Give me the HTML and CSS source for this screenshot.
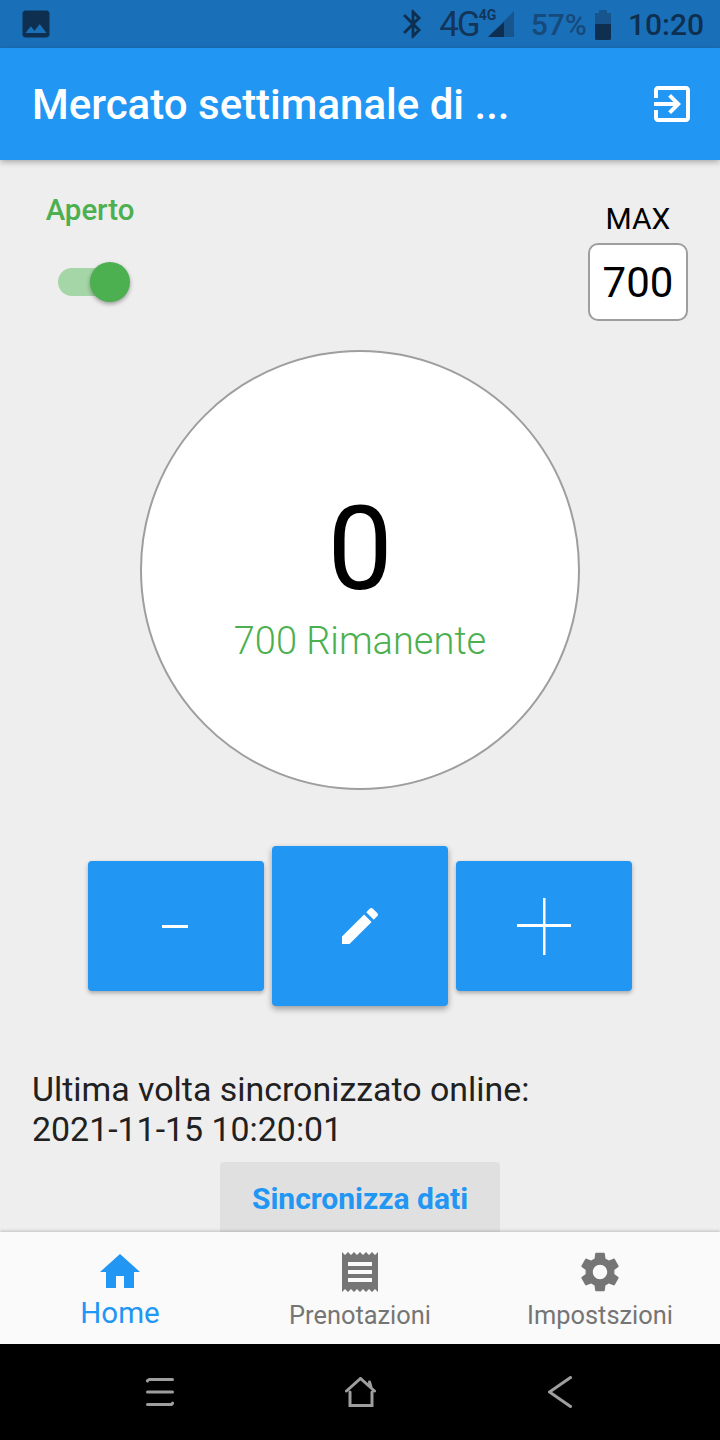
FILE: index.html
```html
<!DOCTYPE html>
<html lang="en">
<head>
    <meta charset="UTF-8">
    <meta name="viewport" content="width=device-width, initial-scale=1.0">
    <title>Mercato settimanale</title>
    <link rel="stylesheet" href="styles.css">
</head>
<body>
    <div class="status-bar">
        <svg class="status-photo" viewBox="0 0 24 24"><path d="M21 19V5c0-1.1-.9-2-2-2H5c-1.1 0-2 .9-2 2v14c0 1.100.9 2 2 2h14c1.100 0 2-.9 2-2zM8.500 13.500l2.500 3.010L14.500 12l4.500 6H5l3.500-4.500z"/></svg>
        <div class="status-right">
            <svg class="status-bt" viewBox="0 0 24 24"><path d="M17.710 7.710L12 2h-1v7.590L6.410 5 5 6.410 10.590 12 5 17.590 6.410 19 11 14.410V22h1l5.710-5.710-4.300-4.290 4.300-4.290zM13 5.830l1.880 1.880L13 9.590V5.830zm1.880 10.460L13 18.170v-3.760l1.880 1.880z"/></svg>
            <span class="status-net">4G</span>
            <span class="status-signal">
                <span class="status-net-small">4G</span>
                <svg viewBox="0 0 26 26"><path class="signal-dim" d="M26 0V26H0z"/><path d="M16 11V26H0z"/></svg>
            </span>
            <span class="status-pct">57%</span>
            <svg class="status-batt" viewBox="0 0 16 30"><path class="signal-dim" d="M4 0h8v3h4v27H0V3h4z"/><path d="M0 14h16v14a2 2 0 0 1-2 2H2a2 2 0 0 1-2-2z"/></svg>
            <span class="status-time">10:20</span>
        </div>
    </div>

    <header class="app-bar">
        <h1>Mercato settimanale di ...</h1>
        <svg class="app-bar-icon" viewBox="0 0 24 24"><path d="M10.090 15.590L11.500 17l5-5-5-5-1.410 1.410L12.670 11H3v2h9.670l-2.580 2.590zM19 3H5c-1.110 0-2 .9-2 2v4h2V5h14v14H5v-4H3v4c0 1.100.89 2 2 2h14c1.100 0 2-.9 2-2V5c0-1.100-.9-2-2-2z"/></svg>
    </header>

    <main class="content">
        <div class="top-row">
            <div class="open-col">
                <div class="open-label">Aperto</div>
                <div class="switch"><div class="switch-knob"></div></div>
            </div>
            <div class="max-col">
                <div class="max-label">MAX</div>
                <div class="max-box">700</div>
            </div>
        </div>

        <div class="counter">
            <div class="counter-value">0</div>
            <div class="counter-left">700 Rimanente</div>
        </div>

        <div class="actions">
            <button class="action-btn">
                <span class="minus"></span>
            </button>
            <button class="action-btn action-btn-big">
                <svg class="edit-icon" viewBox="0 0 24 24"><path d="M3 17.250V21h3.750L17.810 9.940l-3.750-3.750L3 17.250zM20.710 7.040c.39-.39.39-1.020 0-1.410l-2.340-2.340c-.39-.39-1.020-.39-1.410 0l-1.830 1.830 3.750 3.750 1.830-1.830z"/></svg>
            </button>
            <button class="action-btn">
                <svg class="plus-icon" viewBox="0 0 54 57"><path d="M26 0h2.500v26H54v3H28.500v28H26V29H0v-3h26z"/></svg>
            </button>
        </div>

        <p class="sync-text">Ultima volta sincronizzato online:<br>2021-11-15 10:20:01</p>
        <button class="sync-btn">Sincronizza dati</button>
    </main>

    <nav class="bottom-nav">
        <div class="nav-item nav-item-active">
            <svg viewBox="0 0 24 24"><path d="M10 20v-6h4v6h5v-8h3L12 3 2 12h3v8z"/></svg>
            <span>Home</span>
        </div>
        <div class="nav-item">
            <svg viewBox="0 0 24 24"><path d="M18 17H6v-2h12v2zm0-4H6v-2h12v2zm0-4H6V7h12v2zM3 22l1.500-1.500L6 22l1.500-1.500L9 22l1.500-1.500L12 22l1.500-1.500L15 22l1.500-1.500L18 22l1.500-1.500L21 22V2l-1.500 1.500L18 2l-1.500 1.500L15 2l-1.500 1.500L12 2l-1.500 1.500L9 2 7.500 3.500 6 2 4.500 3.500 3 2v20z"/></svg>
            <span>Prenotazioni</span>
        </div>
        <div class="nav-item">
            <svg viewBox="0 0 24 24"><path d="M19.140 12.940c.04-.3.060-.61.060-.94 0-.32-.02-.64-.07-.94l2.030-1.580c.18-.14.23-.41.120-.61l-1.920-3.320c-.12-.22-.37-.29-.59-.22l-2.390.96c-.5-.38-1.030-.7-1.620-.94l-.36-2.540c-.04-.24-.24-.41-.48-.41h-3.840c-.24 0-.43.17-.47.41l-.36 2.540c-.59.24-1.130.57-1.620.94l-2.390-.96c-.22-.08-.47 0-.59.22L2.740 8.870c-.12.21-.08.47.12.61l2.030 1.580c-.05.3-.09.63-.09.94s.02.64.07.94l-2.030 1.580c-.18.14-.23.41-.12.61l1.920 3.320c.12.22.37.29.59.22l2.390-.96c.5.38 1.030.7 1.620.94l.36 2.540c.05.24.24.41.48.41h3.840c.24 0 .44-.17.47-.41l.36-2.540c.59-.24 1.130-.56 1.620-.94l2.390.96c.22.08.47 0 .59-.22l1.920-3.320c.12-.22.07-.47-.12-.61l-2.010-1.580zM12 15.600c-1.980 0-3.600-1.620-3.600-3.600s1.620-3.600 3.600-3.600 3.600 1.620 3.600 3.600-1.620 3.600-3.600 3.600z"/></svg>
            <span>Impostszioni</span>
        </div>
    </nav>

    <div class="system-nav">
        <div class="system-item">
            <svg class="system-menu" viewBox="0 0 28 28"><path d="M3 1.500h23.500M1.500 3v-.5M1.500 14h25M1.500 26.500h24M26.500 25v.5"/></svg>
        </div>
        <div class="system-item">
            <svg class="system-home" viewBox="0 0 31 30"><path d="M1.500 14L15.500 1.500 29.500 14M24.500 5l1.500 5M5 15v13.500h22V15"/></svg>
        </div>
        <div class="system-item">
            <svg class="system-back" viewBox="0 0 24 32"><path d="M22.500 1.500L1.500 16l21 14.500"/></svg>
        </div>
    </div>
</body>
</html>
```

FILE: styles.css
```css
* {
    box-sizing: border-box;
}
body {
    margin: 0;
    width: 720px;
    height: 1440px;
    display: flex;
    flex-direction: column;
    overflow: hidden;
    background-color: #eeeeee;
    font-family: Roboto, "Liberation Sans", sans-serif;
}
.status-bar {
    height: 48px;
    flex-shrink: 0;
    display: flex;
    align-items: center;
    justify-content: space-between;
    padding: 0 16px 0 18px;
    background-color: #1a70b8;
    color: #0e2f50;
    fill: #0e2f50;
}
.status-photo {
    width: 36px;
    height: 36px;
}
.status-right {
    display: flex;
    align-items: center;
}
.status-bt {
    width: 34px;
    height: 34px;
    margin-right: 9px;
}
.status-net {
    font-size: 35px;
    letter-spacing: -2px;
    color: #12365a;
    margin-right: 9px;
}
.status-signal {
    position: relative;
    width: 26px;
    height: 26px;
    margin-right: 17px;
}
.status-signal svg {
    display: block;
    width: 26px;
    height: 26px;
}
.status-net-small {
    position: absolute;
    left: -9px;
    top: -4px;
    font-size: 14px;
    line-height: 16px;
    font-weight: 700;
    color: #12365a;
}
.signal-dim {
    fill: #17558f;
}
.status-pct {
    font-size: 30px;
    font-weight: 500;
    color: #164a7c;
    margin-right: 8px;
}
.status-batt {
    width: 16px;
    height: 30px;
    margin-top: 2px;
    margin-right: 17px;
}
.status-time {
    font-size: 30px;
    font-weight: 500;
}
.app-bar {
    height: 112px;
    flex-shrink: 0;
    display: flex;
    align-items: center;
    justify-content: space-between;
    padding: 0 24px 0 32px;
    background-color: #2196f3;
    box-shadow: 0 2px 6px rgba(0, 0, 0, 0.3);
    position: relative;
    z-index: 2;
}
.app-bar h1 {
    margin: 0;
    font-size: 42px;
    font-weight: 500;
    color: white;
}
.app-bar-icon {
    width: 48px;
    height: 48px;
    fill: white;
}
.content {
    flex: 1;
    min-height: 0;
    overflow: hidden;
    display: flex;
    flex-direction: column;
}
.top-row {
    display: flex;
    justify-content: space-between;
    padding: 0 32px;
}
.open-col {
    display: flex;
    flex-direction: column;
    align-items: center;
    width: 116px;
    padding-top: 34px;
}
.open-label {
    font-size: 29.400px;
    line-height: 33px;
    font-weight: 500;
    color: #4caf50;
}
.switch {
    position: relative;
    width: 68px;
    height: 28px;
    margin-top: 41px;
    margin-left: 4px;
    border-radius: 14px;
    background-color: #a5d6a7;
}
.switch-knob {
    position: absolute;
    right: -4px;
    top: -6px;
    width: 40px;
    height: 40px;
    border-radius: 50%;
    background-color: #4caf50;
    box-shadow: 0 2px 4px rgba(0, 0, 0, 0.35);
}
.max-col {
    display: flex;
    flex-direction: column;
    align-items: center;
    padding-top: 41px;
}
.max-label {
    font-size: 30px;
    line-height: 35px;
    color: black;
}
.max-box {
    width: 100px;
    height: 78px;
    margin-top: 7px;
    display: flex;
    align-items: center;
    justify-content: center;
    background-color: white;
    border: 2px solid #9e9e9e;
    border-radius: 10px;
    font-size: 42px;
    color: black;
}
.counter {
    width: 440px;
    height: 440px;
    margin: 29px auto 0;
    flex-shrink: 0;
    display: flex;
    flex-direction: column;
    align-items: center;
    justify-content: center;
    background-color: white;
    border: 2px solid #9e9e9e;
    border-radius: 50%;
}
.counter-value {
    font-size: 116px;
    line-height: 136px;
    color: black;
}
.counter-left {
    font-size: 38px;
    line-height: 44px;
    font-weight: 300;
    color: #4caf50;
    margin-top: 2px;
    margin-bottom: -4px;
}
.actions {
    display: flex;
    align-items: center;
    justify-content: center;
    gap: 8px;
    margin-top: 56px;
}
.action-btn {
    width: 176px;
    height: 130px;
    padding: 0;
    display: flex;
    align-items: center;
    justify-content: center;
    background-color: #2196f3;
    border: none;
    border-radius: 4px;
    box-shadow: 0 2px 4px rgba(0, 0, 0, 0.3);
}
.action-btn-big {
    height: 160px;
    box-shadow: 0 3px 6px rgba(0, 0, 0, 0.35);
}
.minus {
    display: block;
    width: 26px;
    height: 3px;
    margin-left: -2px;
    margin-top: 1px;
    background-color: white;
}
.edit-icon {
    width: 48px;
    height: 48px;
    fill: white;
}
.plus-icon {
    width: 54px;
    height: 57px;
    margin-left: -1px;
    fill: white;
}
.sync-text {
    margin: 64px 0 0;
    padding: 0 32px;
    font-size: 33.900px;
    line-height: 40px;
    color: #212121;
}
.sync-btn {
    width: 280px;
    height: 74px;
    margin: 12px auto 0;
    flex-shrink: 0;
    padding: 0 0 2px;
    background-color: #e0e0e0;
    border: none;
    border-radius: 4px;
    font-family: inherit;
    font-size: 30px;
    font-weight: 700;
    color: #2196f3;
}
.bottom-nav {
    height: 112px;
    flex-shrink: 0;
    display: flex;
    background-color: #fafafa;
    box-shadow: 0 -1px 3px rgba(0, 0, 0, 0.2);
    position: relative;
    z-index: 1;
}
.nav-item {
    flex: 1;
    display: flex;
    flex-direction: column;
    align-items: center;
    padding-top: 16px;
    color: #757575;
    fill: #757575;
    font-size: 25.400px;
    line-height: 28px;
}
.nav-item svg {
    width: 48px;
    height: 48px;
    margin-bottom: 5px;
    flex-shrink: 0;
}
.nav-item-active {
    color: #2196f3;
    fill: #2196f3;
    font-size: 29.500px;
    line-height: 32px;
}
.nav-item-active svg {
    margin-bottom: 1px;
}
.system-nav {
    height: 96px;
    flex-shrink: 0;
    display: flex;
    align-items: center;
    justify-content: center;
    background-color: black;
}
.system-item {
    width: 200px;
    display: flex;
    justify-content: center;
}
.system-nav svg {
    fill: none;
    stroke: #9e9e9e;
    stroke-width: 3;
    stroke-linecap: round;
}
.system-menu {
    width: 28px;
    height: 28px;
}
.system-home {
    width: 31px;
    height: 30px;
}
.system-back {
    width: 24px;
    height: 32px;
}
```
